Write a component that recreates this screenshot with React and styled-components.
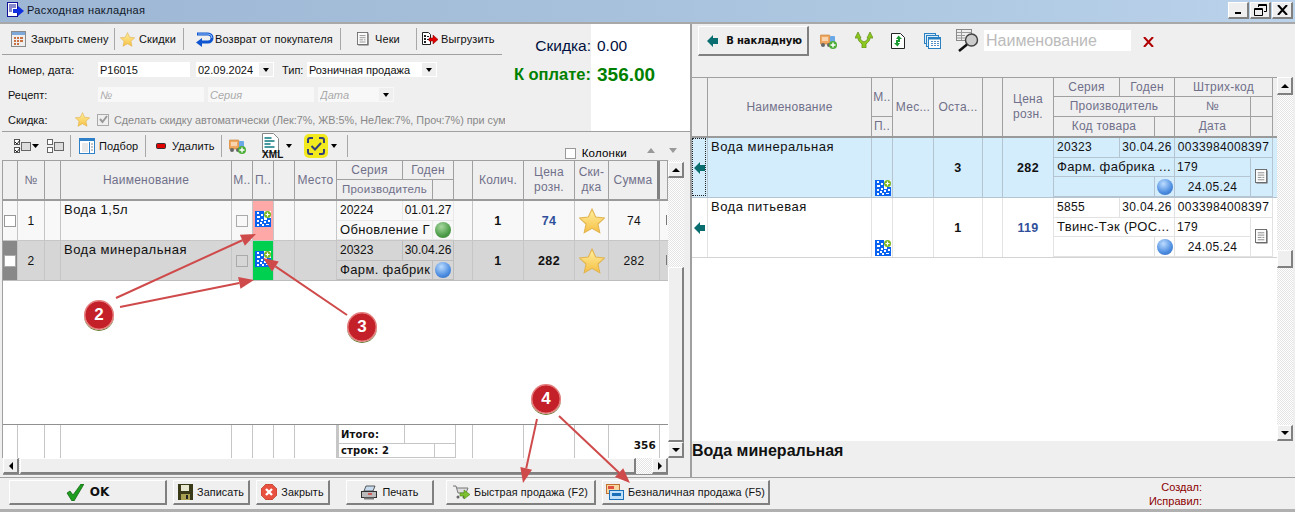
import React from "react";
import styled, { createGlobalStyle } from "styled-components";

const Global = createGlobalStyle`
  html, body { margin: 0; padding: 0; background: #efefef; }
  * { box-sizing: border-box; }
  body { font-family: "Liberation Sans", Arial, sans-serif; font-size: 12px; color: #000; }
`;

const raised = `
  background: #efefef;
  border-top: 1px solid #fff;
  border-left: 1px solid #fff;
  border-right: 2px solid #808080;
  border-bottom: 2px solid #808080;
`;
const dither = `background: repeating-conic-gradient(#fff 0 25%, #e4e4e4 0 50%) 0 0 / 2px 2px;`;

const Page = styled.div`
  position: relative; width: 1295px; height: 512px; overflow: hidden;
  display: flex; flex-direction: column; background: #efefef;
`;
const TitleBar = styled.header`
  height: 24px; flex: none; display: flex; align-items: center; padding: 0 1px 2px 6px; gap: 2px;
  background: linear-gradient(90deg, #9db6d4, #a8c2dd 50%, #bad2ea);
  border-bottom: 2px solid #a8a8a8;
`;
const TitleText = styled.span` font-size: 11px; letter-spacing: 0.35px; color: #101828; flex: 1; `;
const WinButtons = styled.div` display: flex; gap: 1px; margin-right: 1px; `;
const WinButton = styled.button`
  ${raised} width: 21px; height: 17px; padding: 0; display: flex; align-items: center; justify-content: center;
`;
const Main = styled.main` flex: 1; display: flex; min-height: 0; `;
const LeftPane = styled.section` width: 690px; padding-left: 2px; display: flex; flex-direction: column; flex: none; `;
const TopArea = styled.div` height: 108px; flex: none; display: flex; border-bottom: 1px solid #a0a0a0; `;
const FormArea = styled.div` width: 503px; flex: none; display: flex; flex-direction: column; overflow: hidden; `;
const TopToolbar = styled.div` height: 31px; width: 500px; flex: none; display: flex; align-items: center; border-bottom: 1px solid #a0a0a0; `;
const ToolItem = styled.div`
  width: ${p => p.$w ? p.$w + "px" : "auto"}; height: 22px; padding-left: ${p => p.$pl}px; flex: none;
  display: flex; align-items: center; gap: ${p => p.$gap ?? 4}px; white-space: nowrap;
  border-right: ${p => p.$w ? "1px solid #a8a8a8" : "0"}; font-size: 11px; letter-spacing: 0.1px; color: #111;
`;
const Form = styled.div` padding: 7px 0 0 6px; display: flex; flex-direction: column; gap: 10px; `;
const FormRow = styled.div` display: flex; align-items: center; height: 15px; font-size: 11px; white-space: nowrap; `;
const FieldLabel = styled.label` width: ${p => p.$w}px; margin-left: ${p => p.$ml || 0}px; flex: none; color: #111; `;
const Field = styled.div`
  width: ${p => p.$w}px; height: 15px; margin-right: ${p => p.$mr || 0}px; background: ${p => p.$muted ? "#f8f8f8" : "#fff"}; flex: none;
  display: flex; align-items: center; padding-left: 2px; color: ${p => p.$ghost ? "#aaa" : "#111"};
  font-style: ${p => p.$ghost ? "italic" : "normal"};
`;
const FieldText = styled.span` flex: 1; overflow: hidden; `;
const Caret = styled.span`
  width: 0; height: 0; flex: none; margin: ${p => p.$m || "0 4px"}; border-left: 3.5px solid transparent; border-right: 3.5px solid transparent;
  border-top: 4px solid #000;
`;
const CaretBox = styled.span` width: 14px; height: 13px; background: #efefef; display: flex; align-items: center; justify-content: center; flex: none; margin-right: 1px; `;
const Box = styled.span`
  width: ${p => p.$s || 11}px; height: ${p => p.$s || 11}px; flex: none; display: inline-flex; align-items: center; justify-content: center;
  background: ${p => p.$bg || "#fff"}; border: 1px solid ${p => p.$c || "#a0a0a0"};
`;
const StarWrap = styled.span` display: flex; flex: none; `;
const CheckWrap = styled.span` margin-left: 7px; display: flex; flex: none; `;
const Muted = styled.span` color: #888; margin-left: 5px; font-size: 10.8px; flex: none; `;
const Summary = styled.div` flex: 1; display: flex; `;
const SumLabels = styled.div` width: 86px; padding-top: 7px; display: flex; flex-direction: column; align-items: flex-end; `;
const SumValues = styled.div` flex: 1; background: #fff; padding: 7px 0 0 6px; display: flex; flex-direction: column; `;
const SumText = styled.div`
  height: 29px; line-height: 29px; white-space: nowrap; font-size: ${p => p.$size}px; font-weight: ${p => p.$strong ? 700 : 400};
  color: ${p => p.$strong ? "#008000" : "#001040"};
`;
const SecondToolbar = styled.div` height: 28px; flex: none; display: flex; align-items: center; `;
const Columns = styled.div` margin-left: auto; padding: 14px 13px 0 0; display: flex; align-items: center; font-size: 11.5px; letter-spacing: 0.2px; `;
const ColumnsLabel = styled.span` margin: 0 20px 0 6px; `;
const Tri = styled.span`
  width: 0; height: 0; margin-right: ${p => p.$mr || 0}px; border-left: 4.5px solid transparent; border-right: 4.5px solid transparent;
  ${p => p.$up ? "border-bottom: 5px solid #999;" : "border-top: 5px solid #999;"} margin-top: -6px;
`;
const GridArea = styled.div` width: 682px; height: 298px; flex: none; display: flex; border-left: 1px solid #a0a0a0; `;
const TableCol = styled.div` width: 665px; flex: none; display: flex; flex-direction: column; background: #fff; border-top: 1px solid #a0a0a0; `;
const leftCols = "15px 27px 16px 171px 21px 21px 21px 42px 117px 19px 51px 51px 34px 51px 8px";
const LeftHeader = styled.div` display: grid; grid-template-columns: ${leftCols}; height: 40px; flex: none; border-bottom: 2px solid #9a9a9a; background: #efefef; `;
const HCell = styled.div`
  border-right: ${p => p.$thick ? "3px solid #808080" : "1px solid #a0a0a0"}; display: flex; align-items: center; justify-content: center; text-align: center;
  color: #70708a; font-size: ${p => p.$size || 12}px; letter-spacing: 0.25px; line-height: 15px; overflow: hidden; white-space: nowrap;
  grid-column: ${p => p.$col || "auto"}; grid-row: ${p => p.$row || "auto"};
`;
const HNest = styled.div`
  display: grid; grid-template-columns: ${p => p.$cols}; grid-template-rows: ${p => p.$tracks || "repeat(2, 1fr)"};
  & > * { border-bottom: 1px solid #a0a0a0; }
  & > *:nth-last-child(-n+${p => p.$last || 2}) { border-bottom: 0; }
`;
const LeftRow = styled.div`
  display: grid; grid-template-columns: ${leftCols}; height: 40px; flex: none;
  background: ${p => p.$sel ? "#d6d6d6" : "#f8f8f8"}; border-bottom: 1px solid ${p => p.$sel ? "#bdbdbd" : "#c6c6c6"};
`;
const Cell = styled.div`
  position: relative; display: flex; align-items: ${p => p.$top ? "flex-start" : p.$bottom ? "flex-end" : "center"};
  justify-content: ${p => p.$left ? "flex-start" : p.$right ? "flex-end" : "center"}; padding: ${p => p.$pad || 0};
  border-right: 1px solid ${p => p.$line || "#c6c6c6"}; background: ${p => p.$bg || "transparent"};
  font-size: ${p => p.$size || 12.5}px; font-weight: ${p => p.$bold ? 700 : 400}; letter-spacing: ${p => p.$track ?? 0.35}px; white-space: nowrap; overflow: hidden;
  color: ${p => p.$color || "#111"}; grid-column: ${p => p.$col || "auto"}; grid-row: ${p => p.$row || "auto"};
`;
const Nest = styled.div`
  display: grid; grid-template-columns: ${p => p.$cols}; grid-template-rows: repeat(${p => p.$rows || 2}, 1fr);
  border-right: 1px solid ${p => p.$line};
  & > * { border-bottom: 1px solid ${p => p.$line}; }
`;
const Spacer = styled.div` flex: 1; `;
const TotalRow = styled.div` display: grid; grid-template-columns: ${leftCols}; height: 34px; flex: none; border-top: 1px solid #909090; overflow: hidden; `;
const TotalNest = styled.div`
  display: grid; grid-template-columns: 66px 30px 21px; grid-template-rows: 19px 1fr; border-left: 2px solid #c6c6c6;
  & > * { border-bottom: 1px solid #c6c6c6; }
`;
const TotalText = styled(Cell)` font-weight: 700; letter-spacing: 0.15px; font-family: "DejaVu Sans", sans-serif; font-size: 10px; `;
const TotalSum = styled(TotalText)` padding: 6px 3px 0 0; font-size: 10.5px; `;
const Tick = styled.span` position: absolute; left: 6px; top: 14px; width: 1px; height: 10px; background: #777; `;
const VScroll = styled.div` width: 16px; flex: none; padding-top: ${p => p.$pt || 0}px; display: flex; flex-direction: column; ${dither} `;
const SBtn = styled.div` ${raised} width: 16px; height: ${p => p.$h || 16}px; flex: none; display: flex; align-items: center; justify-content: center; `;
const Thumb = styled.div` ${raised} flex: ${p => p.$grow ? 1 : "none"}; height: ${p => p.$h ? p.$h + "px" : "auto"}; `;
const Track = styled.div` flex: none; height: ${p => p.$h}px; `;
const TrackFill = styled.div` flex: 1; `;
const BlankCol = styled.div` flex: 1; background: #fff; `;
const HScroll = styled.div` width: 665px; height: 17px; flex: none; margin-left: 1px; display: flex; border-bottom: 1px solid #909090; ${dither} `;
const HThumb = styled.div` ${raised} width: 616px; margin-left: 1px; flex: none; `;
const HTrack = styled.div` flex: 1; `;
const TriLeft = styled.span` border-top: 4px solid transparent; border-bottom: 4px solid transparent; border-right: 4px solid #000; `;
const TriRight = styled.span` border-top: 4px solid transparent; border-bottom: 4px solid transparent; border-left: 4px solid #000; `;
const TriUp = styled.span` border-left: 4px solid transparent; border-right: 4px solid transparent; border-bottom: 4px solid #000; `;
const TriDown = styled.span` border-left: 4px solid transparent; border-right: 4px solid transparent; border-top: 4px solid #000; `;
const RightPane = styled.section` flex: 1; display: flex; flex-direction: column; border-left: 2px solid #a0a0a0; min-width: 0; `;
const RightToolbar = styled.div` height: 53px; flex: none; display: flex; align-items: flex-start; padding: 2px 0 0 6px; `;
const ToBill = styled.button`
  ${raised} width: 111px; height: 30px; padding: 0 0 0 3px; display: flex; align-items: center; justify-content: center; gap: 8px;
  font: 700 10px "DejaVu Sans", sans-serif; letter-spacing: -0.1px; color: #111; flex: none;
`;
const RIcon = styled.span` margin: ${p => p.$m}; display: flex; flex: none; `;
const SearchBox = styled.div` width: 147px; height: 21px; margin: 4px 0 0 4px; background: #fff; color: #bbb; font-size: 16px; padding-left: 2px; line-height: 21px; flex: none; `;
const RightGrid = styled.div` height: 364px; flex: none; display: flex; `;
const RightTable = styled.div` width: 585px; flex: none; background: #fff; display: flex; flex-direction: column; border-top: 1px solid #a0a0a0; `;
const rightCols = "16px 164px 21px 41px 49px 20px 51px 219px";
const nestCols = "66px 35px 20px 76px 22px";
const RightHeader = styled.div` display: grid; grid-template-columns: ${rightCols}; height: 60px; flex: none; background: #efefef; border-bottom: 2px solid #9a9a9a; `;
const RightRow = styled.div`
  display: grid; grid-template-columns: ${rightCols}; height: 60px; flex: none;
  background: ${p => p.$sel ? "#d4edfd" : "#fff"}; border-bottom: 1px solid ${p => p.$sel ? "#b4c4d0" : "#d4d4d4"};
`;
const Focus = styled.span` position: absolute; inset: 0 1px 1px 0; border: 1px dotted #222; `;
const NameInfo = styled.div` flex: 1; font-size: 16px; font-weight: 700; line-height: 19px; color: #111; white-space: nowrap; `;
const Footer = styled.footer` height: 35px; flex: none; display: flex; padding: 2px 0 0 9px; border-top: 1px solid #a0a0a0; border-bottom: 3px solid #b0b0b0; position: relative; `;
const FootBtn = styled.button`
  ${raised} width: ${p => p.$w}px; height: 25px; margin-right: ${p => p.$mr}px; flex: none; padding: 0; display: flex; align-items: center; justify-content: center; white-space: nowrap;
  gap: ${p => p.$gap ?? 4}px; font: ${p => p.$ok ? '700 12px "DejaVu Sans", sans-serif' : '10.8px "Liberation Sans", sans-serif'}; letter-spacing: .1px; color: #111;
`;
const Audit = styled.div` margin-left: auto; margin-right: 93px; text-align: right; color: #8b0000; font-size: 11px; line-height: 14px; `;
const Overlay = styled.svg` position: absolute; left: 0; top: 0; pointer-events: none; `;
const Badge = styled.div`
  position: absolute; left: ${p => p.$x - 15}px; top: ${p => p.$y - 15}px; width: 30px; height: 30px; border-radius: 50%;
  background: radial-gradient(circle at 50% 50%, #c4202a 0 62%, #e47a7a 65% 72%, #b41018 76%, #8a0a10 100%);
  box-shadow: 0 1px 0 #6a7a30; color: #fff; font: 700 17px "Liberation Sans", sans-serif; display: flex; align-items: center; justify-content: center;
`;
const Ball = styled.span`
  width: 16px; height: 16px; border-radius: 50%; flex: none;
  background: radial-gradient(circle at 40% 30%, ${p => p.$green ? "#a8d8a0, #4c9c48 60%, #3a7a38" : "#bcdcff, #4c8ce0 60%, #2f66b8"});
`;

const StarI = ({ s = 15 }) => (
  <svg width={s} height={s} viewBox="0 0 24 24">
    <defs><linearGradient id="st" x1="0" y1="0" x2="0" y2="1"><stop offset="0" stopColor="#fff0a0" /><stop offset="1" stopColor="#f6c044" /></linearGradient></defs>
    <path d="M12 1l3.400 7.400 8.100.9-6 5.500 1.700 8L12 18.700l-7.200 4.100 1.700-8-6-5.500 8.100-.9z" fill="url(#st)" stroke="#e2b450" strokeWidth="1" />
  </svg>
);
const DataMatrix = () => (
  <svg width="16" height="16" viewBox="0 0 16 16" style={{ flex: "none" }}>
    <rect width="16" height="16" fill="#0a62f0" />
    <path d="M2 1h2v2H2zM2 5h3v2H2zM6 3h2v2H6zM2 9h2v2H2zM6 8h2v2H6zM9 7h3v2H9zM5 11h2v2H5zM9 10h2v2H9zM13 9h2v2h-2zM2 13h2v2H2zM7 13h2v2H7zM11 13h3v1h-3z" fill="#fff" />
    <rect x="9" y="0" width="7" height="7" fill="#fff" />
    <circle cx="12.500" cy="3.500" r="3.500" fill="#7ab520" />
    <path d="M12.500 1.500v4M10.500 3.500h4" stroke="#fff" strokeWidth="1.200" />
  </svg>
);
const LeftArrow = () => (
  <svg width="11" height="12" viewBox="0 0 11 12"><path d="M0 6l6-6v3h5v6H6v3z" fill="#0a6d70" /></svg>
);
const DocIcon = ({ s = 13 }) => (
  <svg width={s} height={s + 2} viewBox="0 0 14 16">
    <rect x="1.500" y="1.500" width="12" height="14" fill="#666" />
    <rect x=".5" y=".5" width="12" height="14" fill="#fbfbfb" stroke="#666" />
    <path d="M3 4h7M3 6.500h7M3 9h4M8 9h2M3 11.500h7" stroke="#888" />
  </svg>
);
const Calendar = () => (
  <svg width="15" height="16" viewBox="0 0 15 16">
    <rect x=".5" y=".5" width="14" height="15" fill="#eee" stroke="#8a8a8a" />
    <rect x="1" y="1" width="13" height="3" fill="#7ea8d8" />
    <path d="M3 6h2v2H3zM6 6h2v2H6zM9 6h3v2H9zM3 9h2v2H3zM6 9h2v2H6zM9 9h3v2H9zM3 12h2v2H3zM6 12h2v2H6z" fill="#c87040" />
  </svg>
);
const ReturnI = () => (
  <svg width="20" height="15" viewBox="0 0 20 15">
    <path d="M3 2h11a4 4 0 0 1 0 8H7" fill="none" stroke="#0f55d0" strokeWidth="3" />
    <path d="M8 6L2 10.500 8 15z" fill="#0f55d0" />
    <path d="M4 2h10a4 4 0 0 1 4 4" fill="none" stroke="#8fbcf5" />
  </svg>
);
const ExportI = () => (
  <svg width="16" height="15" viewBox="0 0 16 15">
    <path d="M.5 .5h6l2 2v10h-8z" fill="#fff" stroke="#222" />
    <path d="M2 3h2v2H2zM2 6h2v2H2zM2 9h2v2H2zM5 4h2v1H5zM5 7h2v1H5z" fill="#222" />
    <path d="M7 6h4V3l5 4.500-5 4.500V9H7z" fill="#e00000" stroke="#800" strokeWidth=".5" />
  </svg>
);
const ChecksI = () => (
  <svg width="25" height="14" viewBox="0 0 25 14">
    <rect x=".5" y=".5" width="5" height="5" fill="#fff" stroke="#555" /><rect x=".5" y="8.500" width="5" height="5" fill="#fff" stroke="#555" />
    <path d="M1 3l2 2 3-4M1 11l2 2 3-4" fill="none" stroke="#222" />
    <rect x="7.500" y="3.500" width="9" height="8" fill="#ddd" stroke="#666" />
    <path d="M18 5h7l-3.500 4z" fill="#000" />
  </svg>
);
const BoxesI = () => (
  <svg width="17" height="14" viewBox="0 0 17 14">
    <rect x=".5" y=".5" width="5" height="5" fill="#fff" stroke="#666" /><rect x=".5" y="8.500" width="5" height="5" fill="#fff" stroke="#666" />
    <rect x="7.500" y="3.500" width="9" height="8" fill="#ddd" stroke="#666" />
  </svg>
);
const PickI = () => (
  <svg width="16" height="16" viewBox="0 0 16 16">
    <rect x=".5" y=".5" width="15" height="15" fill="#fff" stroke="#2e80c8" />
    <rect x="1" y="1" width="14" height="2" fill="#2e80c8" />
    <path d="M3 5h6v9H3z" fill="#e8e8e8" /><path d="M10.500 4v11" stroke="#2e80c8" />
    <path d="M12 6h2M12 9h2M12 12h2" stroke="#888" />
  </svg>
);
const MinusI = () => (
  <svg width="10" height="6" viewBox="0 0 10 6"><rect x=".5" y=".5" width="9" height="5" rx="1" fill="#e00000" stroke="#333" /></svg>
);
const TruckI = () => (
  <svg width="17" height="15" viewBox="0 0 17 15">
    <rect x="0" y="1" width="10" height="9" rx="1" fill="#f0a860" stroke="#c07830" strokeWidth=".6" />
    <path d="M2 4h6M2 6h6" stroke="#fff" />
    <rect x="10" y="2" width="5" height="8" rx="1" fill="#6aa8e8" />
    <circle cx="3" cy="11" r="2" fill="#666" /><circle cx="9" cy="11" r="2" fill="#666" />
    <circle cx="13" cy="11" r="4" fill="#4cae38" /><path d="M13 8.500v5M10.500 11h5" stroke="#fff" strokeWidth="1.400" />
  </svg>
);
const XmlI = () => (
  <svg width="24" height="26" viewBox="0 0 24 26">
    <path d="M1.500 .5h11l5 5v14h-16z" fill="#fff" stroke="#888" />
    <path d="M3.500 5h7M3.500 8h10M3.500 11h6M3.500 14h10" stroke="#0a7a80" strokeWidth="1.300" />
    <text x="1" y="25" fontFamily="Liberation Sans" fontWeight="700" fontSize="10" fill="#111">XML</text>
  </svg>
);
const YellowI = () => (
  <svg width="24" height="24" viewBox="0 0 24 24">
    <rect width="24" height="24" rx="5" fill="#f2ea1e" />
    <path d="M4 9V6a2 2 0 0 1 2-2h3M15 4h3a2 2 0 0 1 2 2v3M20 15v3a2 2 0 0 1-2 2h-3M9 20H6a2 2 0 0 1-2-2v-3" fill="none" stroke="#33407a" strokeWidth="2" />
    <path d="M7.500 12l3.500 3.500 6-6.500" fill="none" stroke="#33407a" strokeWidth="2" />
  </svg>
);
const ForkI = () => (
  <svg width="18" height="16" viewBox="0 0 18 16">
    <path d="M7 16v-4C5 10 3 9 3 6L0 6l3-6 3 6H5c0 1.500 2.500 3 4 4 1.500-1 4-2.500 4-4h-1l3-6 3 6h-3c0 3-2 4-4 6v4z" fill="#8cc820" stroke="#5a8a10" strokeWidth=".7" />
  </svg>
);
const SyncDoc = () => (
  <svg width="14" height="16" viewBox="0 0 14 16">
    <path d="M.5 .5h9l4 4v11H.5z" fill="#fff" stroke="#222" />
    <path d="M7.500 2.500L11 6H9v3H7V6H5zM6.500 13.500L3 10h2V7h2v3h2z" fill="#1a9a30" />
  </svg>
);
const WindowsI = () => (
  <svg width="17" height="16" viewBox="0 0 17 16">
    <rect x=".5" y=".5" width="11" height="10" fill="#d8ecfa" stroke="#2a80c0" />
    <rect x="2.500" y="2.500" width="12" height="11" fill="#d8ecfa" stroke="#2a80c0" />
    <rect x="4.500" y="4.500" width="12" height="11" fill="#fff" stroke="#2a80c0" />
    <rect x="4.500" y="4.500" width="12" height="2" fill="#2a80c0" />
    <path d="M7 8h2v1H7zM10 8h2v1h-2zM13 8h2v1h-2zM7 10h2v1H7zM10 10h2v1h-2zM13 10h2v1h-2zM7 12h2v1H7zM10 12h2v1h-2zM13 12h2v1h-2z" fill="#5a90c8" />
  </svg>
);
const SearchI = () => (
  <svg width="24" height="23" viewBox="0 0 24 23">
    <rect x=".5" y=".5" width="15" height="11" fill="#eee" stroke="#888" />
    <path d="M1 3.500h14M1 6.500h8M1 9h8M5.500 1v10" stroke="#999" />
    <circle cx="15.500" cy="11" r="6" fill="#ccc" stroke="#444" strokeWidth="1.500" />
    <path d="M11 15.500L3 22" stroke="#111" strokeWidth="2.500" />
  </svg>
);
const CrossI = () => (
  <svg width="11" height="10" viewBox="0 0 11 10"><path d="M1 0l9 10M10 0L1 10" stroke="#b00000" strokeWidth="2" /></svg>
);
const OkI = () => (
  <svg width="18" height="17" viewBox="0 0 18 17"><path d="M1 9l3-2 3 4 8-11h3L8 17H6z" fill="#1e9e1e" stroke="#0a5a0a" strokeWidth=".7" /></svg>
);
const SaveI = () => (
  <svg width="15" height="16" viewBox="0 0 15 16">
    <rect width="15" height="16" fill="#3a3a18" />
    <rect x="3" y="1" width="8" height="6" fill="#e8e8d0" />
    <rect x="3" y="10" width="9" height="6" fill="#a8a050" /><rect x="8" y="11" width="2" height="4" fill="#222" />
  </svg>
);
const CloseI = () => (
  <svg width="16" height="16" viewBox="0 0 16 16">
    <path d="M5 0h6l5 5v6l-5 5H5l-5-5V5z" fill="#e85040" stroke="#a83020" strokeWidth=".6" />
    <path d="M5 5l6 6M11 5l-6 6" stroke="#fff" strokeWidth="2.400" />
  </svg>
);
const PrintI = () => (
  <svg width="16" height="15" viewBox="0 0 16 15">
    <path d="M5 1h9l-2 5H3z" fill="#c8dcf0" stroke="#333" strokeWidth=".8" />
    <rect x=".5" y="6.500" width="15" height="6" fill="#bbb" stroke="#333" />
    <path d="M7 9h4" stroke="#d00" /><path d="M3 12.500h10v2H3z" fill="#777" />
  </svg>
);
const CartI = () => (
  <svg width="17" height="15" viewBox="0 0 17 15">
    <path d="M0 1h3l2 7h8l2-5H4" fill="#ddd" stroke="#777" />
    <circle cx="5" cy="12" r="1.500" fill="#666" /><circle cx="11" cy="12" r="1.500" fill="#666" />
    <path d="M7 8h4V5l6 4.500L11 14v-3H7z" fill="#7cc030" stroke="#4a8a10" strokeWidth=".6" />
  </svg>
);
const CardsI = () => (
  <svg width="18" height="16" viewBox="0 0 18 16">
    <rect x=".5" y=".5" width="13" height="9" fill="#f8d8a0" stroke="#c07030" /><rect x="2" y="2" width="6" height="3" fill="#e05040" />
    <rect x="3.500" y="6.500" width="14" height="9" fill="#bfe0f8" stroke="#1a70b8" /><rect x="6" y="9" width="9" height="3" fill="#1a70b8" />
  </svg>
);
const TitleIcon = () => (
  <svg width="19" height="18" viewBox="0 0 19 18">
    <rect x="1.500" y="1.500" width="10" height="14" fill="#fff" stroke="#10109a" />
    <path d="M3 4h7M3 6h7M3 8h3M3 10h3" stroke="#10109a" />
    <path d="M7 8h5V5l6 5-6 5v-3H7z" fill="#1030e0" />
  </svg>
);
const CheckMark = () => (
  <svg width="9" height="9" viewBox="0 0 9 9"><path d="M1 4l2.500 3L8 1" fill="none" stroke="#999" strokeWidth="2" /></svg>
);

const ArrowLine = ({ x1, y1, x2, y2, len = 15, w = 6 }) => {
  const a = Math.atan2(y2 - y1, x2 - x1), c = Math.cos(a), s = Math.sin(a);
  const bx = x2 - len * c, by = y2 - len * s;
  return (
    <g>
      <line x1={x1} y1={y1} x2={bx} y2={by} stroke="#cf4a4a" strokeWidth="2" />
      <polygon points={`${x2},${y2} ${bx + w * s},${by - w * c} ${bx - w * s},${by + w * c}`} fill="#cf4a4a" />
    </g>
  );
};

const leftRows = [
  { n: 1, name: "Вода 1,5л", serial: "20224", exp: "01.01.27", maker: "Обновление Г", green: true, bg: "#ffa8a8", price: "74", priceColor: "#2f4f9a", sum: "74" },
  { n: 2, name: "Вода минеральная", serial: "20323", exp: "30.04.26", maker: "Фарм. фабрик", green: false, bg: "#00d050", price: "282", priceColor: "#111", sum: "282", sel: true },
];
const rightRows = [
  { name: "Вода минеральная", serial: "20323", maker: "Фарм. фабрика ...", qty: "3", price: "282", priceColor: "#111", sel: true },
  { name: "Вода питьевая", serial: "5855", maker: "Твинс-Тэк (РОС...", qty: "1", price: "119", priceColor: "#2f4f9a" },
];

export default function App() {
  return (
    <Page>
      <Global />
      <TitleBar>
        <TitleIcon />
        <TitleText>Расходная накладная</TitleText>
        <WinButtons>
          <WinButton><svg width="11" height="11"><rect x="2" y="8" width="6" height="2" fill="#000" /></svg></WinButton>
          <WinButton><svg width="13" height="12"><path d="M4.500 3V.5h8v7H10M.5 4.500h8v7h-8zM.5 5.500h8M4.500 1.500h8" fill="none" stroke="#000" /></svg></WinButton>
          <WinButton><svg width="11" height="10"><path d="M1 0l9 10M10 0L1 10" stroke="#000" strokeWidth="2" /></svg></WinButton>
        </WinButtons>
      </TitleBar>
      <Main>
        <LeftPane>
          <TopArea>
            <FormArea>
              <TopToolbar>
                <ToolItem $w={113} $pl={9} $gap={5}><Calendar />Закрыть смену</ToolItem>
                <ToolItem $w={69} $pl={5}><StarI />Скидки</ToolItem>
                <ToolItem $w={157} $pl={10} $gap={1}><ReturnI />Возврат от покупателя</ToolItem>
                <ToolItem $w={76} $pl={16} $gap={6}><DocIcon s={12} />Чеки</ToolItem>
                <ToolItem $pl={5} $gap={3}><ExportI />Выгрузить</ToolItem>
              </TopToolbar>
              <Form>
                <FormRow>
                  <FieldLabel $w={90}>Номер, дата:</FieldLabel>
                  <Field $w={92} $mr={6}>P16015</Field>
                  <Field $w={78}><FieldText>02.09.2024</FieldText><CaretBox><Caret $m="0" /></CaretBox></Field>
                  <FieldLabel $w={25} $ml={8}>Тип:</FieldLabel>
                  <Field $w={130}><FieldText>Розничная продажа</FieldText><CaretBox><Caret $m="0" /></CaretBox></Field>
                </FormRow>
                <FormRow>
                  <FieldLabel $w={90}>Рецепт:</FieldLabel>
                  <Field $w={106} $mr={4} $muted $ghost>№</Field>
                  <Field $w={106} $mr={4} $muted $ghost>Серия</Field>
                  <Field $w={76} $muted $ghost><FieldText>Дата</FieldText><CaretBox><Caret $m="0" /></CaretBox></Field>
                </FormRow>
                <FormRow>
                  <FieldLabel $w={67}>Скидка:</FieldLabel>
                  <StarWrap><StarI /></StarWrap>
                  <CheckWrap><Box $s={12} $bg="#efefef" $c="#aaa"><CheckMark /></Box></CheckWrap>
                  <Muted>Сделать скидку автоматически (Лек:7%, ЖВ:5%, НеЛек:7%, Проч:7%) при сум</Muted>
                </FormRow>
              </Form>
            </FormArea>
            <Summary>
              <SumLabels>
                <SumText $size={15.5}>Скидка:</SumText>
                <SumText $size={16.5} $strong>К оплате:</SumText>
              </SumLabels>
              <SumValues>
                <SumText $size={15.5}>0.00</SumText>
                <SumText $size={19} $strong>356.00</SumText>
              </SumValues>
            </Summary>
          </TopArea>
          <SecondToolbar>
            <ToolItem $w={69} $pl={12} $gap={8}><ChecksI /><BoxesI /></ToolItem>
            <ToolItem $w={75} $pl={8} $gap={4}><PickI />Подбор</ToolItem>
            <ToolItem $w={76} $pl={10} $gap={6}><MinusI />Удалить</ToolItem>
            <ToolItem $w={126} $pl={7} $gap={3}>
              <TruckI />
              <RIcon $m="0 0 0 12px"><XmlI /></RIcon><Caret $m="0 9px 0 -2px" />
              <YellowI /><Caret $m="0" />
            </ToolItem>
            <Columns>
              <Box $c="#999" />
              <ColumnsLabel>Колонки</ColumnsLabel>
              <Tri $up $mr={14} />
              <Tri />
            </Columns>
          </SecondToolbar>
          <GridArea>
            <TableCol>
              <LeftHeader>
                <HCell />
                <HCell>№</HCell>
                <HCell />
                <HCell>Наименование</HCell>
                <HCell>М..</HCell>
                <HCell>П..</HCell>
                <HCell />
                <HCell>Место</HCell>
                <HNest $cols="66px 30px 21px" $last={2}>
                  <HCell>Серия</HCell>
                  <HCell $col="span 2">Годен</HCell>
                  <HCell $col="span 2" $size={11.5}>Производитель</HCell>
                  <HCell />
                </HNest>
                <HCell />
                <HCell>Колич.</HCell>
                <HCell>Цена<br />розн.</HCell>
                <HCell>Ски-<br />дка</HCell>
                <HCell $thick>Сумма</HCell>
                <HCell />
              </LeftHeader>
              {leftRows.map(r => {
                const line = r.sel ? "#bdbdbd" : "#e8e8e8";
                return (
                  <LeftRow key={r.n} $sel={r.sel}>
                    <Cell $bg={r.sel ? "#888" : "transparent"}><Box $s={12} $bg="#fff" $c={r.sel ? "#aaa" : "#999"} /></Cell>
                    <Cell $size={12}>{r.n}</Cell>
                    <Cell />
                    <Cell $top $left $pad="1px 0 0 3px" $size={13} $track={0.5}>{r.name}</Cell>
                    <Cell><Box $s={12} $bg={r.sel ? "#d6d6d6" : "#f8f8f8"} $c="#aaa" /></Cell>
                    <Cell $top $bg={r.bg} $pad="10px 0 0 0"><DataMatrix /></Cell>
                    <Cell />
                    <Cell />
                    <Nest $cols="66px 30px 21px" $line={line}>
                      <Cell $left $pad="0 0 0 3px" $line={line} $size={12} $track={0}>{r.serial}</Cell>
                      <Cell $col="span 2" $line="transparent" $size={12} $track={0}>{r.exp}</Cell>
                      <Cell $col="span 2" $left $pad="0 0 0 3px" $line={line} $size={13}>{r.maker}</Cell>
                      <Cell $line="transparent"><Ball $green={r.green} /></Cell>
                    </Nest>
                    <Cell />
                    <Cell $bold>1</Cell>
                    <Cell $bold $color={r.priceColor}>{r.price}</Cell>
                    <Cell><StarI s={26} /></Cell>
                    <Cell $size={12}>{r.sum}</Cell>
                    <Cell $line="transparent"><Tick /></Cell>
                  </LeftRow>
                );
              })}
              <Spacer />
              <TotalRow>
                <Cell /><Cell /><Cell /><Cell /><Cell /><Cell /><Cell /><Cell />
                <TotalNest>
                  <TotalText $left $pad="0 0 0 2px">Итого:</TotalText>
                  <TotalText $col="span 2" />
                  <TotalText $col="span 2" $left $pad="0 0 0 2px">строк: 2</TotalText>
                  <TotalText />
                </TotalNest>
                <Cell /><Cell /><Cell /><Cell />
                <TotalSum $right>356</TotalSum>
                <Cell $line="transparent" />
              </TotalRow>
            </TableCol>
            <VScroll $pt={2}>
              <SBtn><TriUp /></SBtn>
              <Track $h={89} />
              <Thumb $grow />
              <SBtn><TriDown /></SBtn>
            </VScroll>
          </GridArea>
          <HScroll>
            <SBtn><TriLeft /></SBtn>
            <HThumb />
            <HTrack />
            <SBtn><TriRight /></SBtn>
          </HScroll>
        </LeftPane>
        <RightPane>
          <RightToolbar>
            <ToBill><LeftArrow />В накладную</ToBill>
            <RIcon $m="8px 0 0 11px"><TruckI /></RIcon>
            <RIcon $m="6px 0 0 18px"><ForkI /></RIcon>
            <RIcon $m="7px 0 0 18px"><SyncDoc /></RIcon>
            <RIcon $m="7px 0 0 19px"><WindowsI /></RIcon>
            <RIcon $m="3px 0 0 15px"><SearchI /></RIcon>
            <SearchBox>Наименование</SearchBox>
            <RIcon $m="11px 0 0 12px"><CrossI /></RIcon>
          </RightToolbar>
          <RightGrid>
            <RightTable>
              <RightHeader>
                <HCell />
                <HCell>Наименование</HCell>
                <HNest $cols="1fr" $last={1} $tracks="39px 1fr">
                  <HCell>М..</HCell>
                  <HCell>П..</HCell>
                </HNest>
                <HCell>Мес...</HCell>
                <HCell>Оста...</HCell>
                <HCell />
                <HCell>Цена<br />розн.</HCell>
                <HNest $cols={nestCols} $tracks="repeat(3, 1fr)" $last={4}>
                  <HCell>Серия</HCell>
                  <HCell $col="span 2">Годен</HCell>
                  <HCell $col="span 2">Штрих-код</HCell>
                  <HCell $col="span 3">Производитель</HCell>
                  <HCell>№</HCell>
                  <HCell />
                  <HCell $col="span 2">Код товара</HCell>
                  <HCell />
                  <HCell>Дата</HCell>
                  <HCell />
                </HNest>
              </RightHeader>
              {rightRows.map(r => {
                const line = r.sel ? "#b4c4d0" : "#e2e2e2";
                return (
                  <RightRow key={r.name} $sel={r.sel}>
                    <Cell $line={line}>{r.sel && <Focus />}<LeftArrow /></Cell>
                    <Cell $top $left $pad="1px 0 0 3px" $size={13} $track={0.5} $line={line}>{r.name}</Cell>
                    <Cell $bottom $pad="0 0 1px 1px" $line={line}><DataMatrix /></Cell>
                    <Cell $line={line} />
                    <Cell $bold $line={line}>{r.qty}</Cell>
                    <Cell $line={line} />
                    <Cell $bold $color={r.priceColor} $line={line}>{r.price}</Cell>
                    <Nest $cols={nestCols} $rows={3} $line={line}>
                      <Cell $left $pad="0 0 0 3px" $line={line} $size={12}>{r.serial}</Cell>
                      <Cell $col="span 2" $line={line} $size={12}>30.04.26</Cell>
                      <Cell $col="span 2" $line="transparent" $size={12}>0033984008397</Cell>
                      <Cell $col="span 3" $left $pad="0 0 0 3px" $size={13} $line={line}>{r.maker}</Cell>
                      <Cell $left $pad="0 0 0 2px" $line={line} $size={12}>179</Cell>
                      <Cell $line="transparent" $row="2 / span 2" $col="5"><DocIcon /></Cell>
                      <Cell $col="span 2" $line={line} />
                      <Cell $line={line}><Ball /></Cell>
                      <Cell $line={line} $size={12}>24.05.24</Cell>
                    </Nest>
                  </RightRow>
                );
              })}
              <BlankCol />
            </RightTable>
            <VScroll>
              <SBtn $h={18}><TriUp /></SBtn>
              <Track $h={155} />
              <Thumb $h={18} />
              <TrackFill />
              <SBtn><TriDown /></SBtn>
            </VScroll>
          </RightGrid>
          <NameInfo>Вода минеральная</NameInfo>
        </RightPane>
      </Main>
      <Footer>
        <FootBtn $w={158} $mr={6} $ok $gap={6}><OkI />OK</FootBtn>
        <FootBtn $w={77} $mr={6}><SaveI />Записать</FootBtn>
        <FootBtn $w={74} $mr={16}><CloseI />Закрыть</FootBtn>
        <FootBtn $w={88} $mr={12} $gap={6}><PrintI />Печать</FootBtn>
        <FootBtn $w={150} $mr={6}><CartI />Быстрая продажа (F2)</FootBtn>
        <FootBtn $w={168} $mr={0}><CardsI />Безналичная продажа (F5)</FootBtn>
        <Audit>Создал:<br />Исправил:</Audit>
      </Footer>
      <Overlay width="1295" height="512" viewBox="0 0 1295 512">
        <ArrowLine x1={116} y1={298} x2={256} y2={234} />
        <ArrowLine x1={120} y1={307} x2={254} y2={280} />
        <ArrowLine x1={347} y1={315} x2={263} y2={258} />
        <ArrowLine x1={537} y1={419} x2={523} y2={483} />
        <ArrowLine x1={559} y1={416} x2={630} y2={483} />
      </Overlay>
      <Badge $x={99} $y={315}>2</Badge>
      <Badge $x={362} $y={327}>3</Badge>
      <Badge $x={546} $y={399}>4</Badge>
    </Page>
  );
}
